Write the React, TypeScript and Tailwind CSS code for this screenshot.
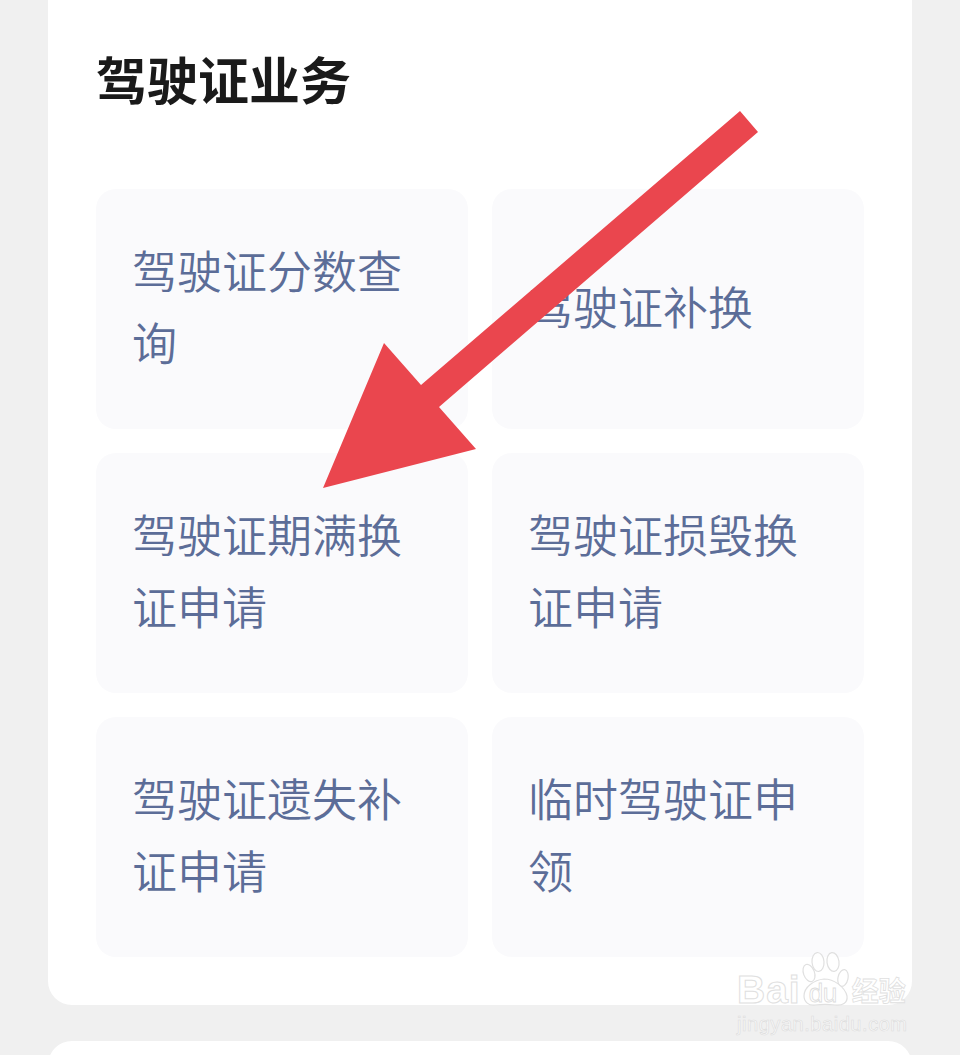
const items = [
  "驾驶证分数查询",
  "驾驶证补换",
  "驾驶证期满换证申请",
  "驾驶证损毁换证申请",
  "驾驶证遗失补证申请",
  "临时驾驶证申领",
];

function Watermark() {
  return (
    <div className="absolute left-[737px] top-[951px] flex flex-col">
      <div className="flex h-[56px] items-end whitespace-nowrap">
        <span className="text-[39px] leading-[34px] font-bold tracking-[1px] text-white/70 [-webkit-text-stroke:1px_#e0e0e0] [font-family:'Liberation_Sans',sans-serif]">
          Bai
        </span>
        <div className="relative h-[56px] w-[48px] shrink-0">
          <svg width="48" height="56" viewBox="0 0 48 56" className="absolute inset-0" fill="#ffffff" fillOpacity="0.7" stroke="#e0e0e0" strokeWidth="1.2">
            {/* paw */}
            <ellipse cx="8" cy="22" rx="5.5" ry="9" transform="rotate(-20 8 22)" />
            <ellipse cx="17" cy="11" rx="6" ry="9.5" transform="rotate(-5 17 11)" />
            <ellipse cx="32" cy="11" rx="6" ry="9.5" transform="rotate(-8 32 11)" />
            <ellipse cx="42" cy="27" rx="5" ry="8.5" transform="rotate(12 42 27)" />
            <path d="M3 45c0-9 10-16 20-17 10 0 21 8 23 17 1 7-5 10-12 9-7-1-13-1-20 0-6 1-11-3-11-9z" />
          </svg>
          <span className="absolute left-[8px] top-[30px] text-[26px] leading-[24px] tracking-[-0.5px] text-white/70 [-webkit-text-stroke:0.8px_#dcdcdc] [font-family:'Liberation_Sans',sans-serif]">
            du
          </span>
        </div>
        <span className="ml-[3px] text-[27px] leading-[34px] font-bold text-white/70 [-webkit-text-stroke:0.8px_#e0e0e0]">
          经验
        </span>
      </div>
      <span className="mt-[5px] text-[20px] leading-[24px] tracking-[0.55px] whitespace-nowrap text-white/60 [-webkit-text-stroke:0.6px_#dcdcdc] [font-family:'Liberation_Sans',sans-serif]">
        jingyan.baidu.com
      </span>
    </div>
  );
}

export default function App() {
  return (
    <div className="relative h-[1055px] w-[960px] overflow-hidden bg-[#f0f0f0] [font-family:'Noto_Sans_CJK_SC',sans-serif]">
      <div className="mx-[48px] mt-[-24px] h-[1029px] rounded-[24px] bg-white px-[48px] pt-[66px]">
        <h1 className="text-[51px] leading-[72px] font-bold text-[#1a1a1a]">驾驶证业务</h1>
        <div className="mt-[75px] grid grid-cols-2 gap-[24px]">
          {items.map((t) => (
            <div key={t} className="flex h-[240px] items-center rounded-[20px] bg-[#fafafc] px-[36px] pb-[6px]">
              <p className="text-[45px] leading-[72px] font-[350] text-[#5c6d98]">{t}</p>
            </div>
          ))}
        </div>
      </div>
      <div className="mx-[48px] mt-[36px] h-[60px] rounded-t-[24px] bg-white" />

      {/* red annotation arrow */}
      <svg className="absolute left-0 top-0" width="960" height="1055" viewBox="0 0 960 1055">
        <polygon points="740,111 758,132 439,407 476,449 323,488 384,343 421,385" fill="#ea464e" />
      </svg>

      <Watermark />
    </div>
  );
}
